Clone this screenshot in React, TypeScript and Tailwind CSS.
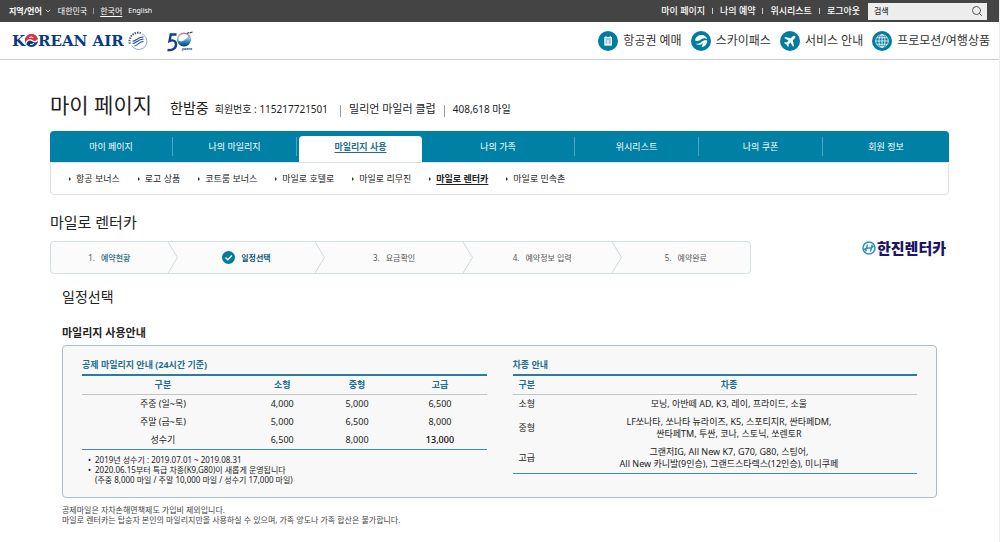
import React from 'react';
import { ChevronDown, Search } from 'lucide-react';

const tabs = ['마이 페이지', '나의 마일리지', '마일리지 사용', '나의 가족', '위시리스트', '나의 쿠폰', '회원 정보'];

const subMenu = ['항공 보너스', '로고 상품', '코트룸 보너스', '마일로 호텔로', '마일로 리무진', '마일로 렌터카', '마일로 민속촌'];

const steps = ['예약현황', '일정선택', '요금확인', '예약정보 입력', '예약완료'];

const mileage = [
  ['주중 (일~목)', '4,000', '5,000', '6,500'],
  ['주말 (금~토)', '5,000', '6,500', '8,000'],
  ['성수기', '6,500', '8,000', '13,000'],
];

const cars = [
  { type: '소형', models: ['모닝, 아반떼 AD, K3, 레이, 프라이드, 소울'] },
  { type: '중형', models: ['LF쏘나타, 쏘나타 뉴라이즈, K5, 스포티지R, 싼타페DM,', '싼타페TM, 투싼, 코나, 스토닉, 쏘렌토R'] },
  { type: '고급', models: ['그랜저IG, All New K7, G70, G80, 스팅어,', 'All New 카니발(9인승), 그랜드스타렉스(12인승), 미니쿠페'] },
];

const TicketIcon = () => (
  <svg viewBox="0 0 20 20" className="size-5" aria-hidden="true">
    <circle cx="10" cy="10" r="10" fill="#007c9e" />
    <rect x="6.3" y="6" width="7.6" height="8.6" fill="#fff" />
    <path d="M8 5v2M12.2 5v2" stroke="#fff" strokeWidth="1" />
    <path d="M7.5 8h5.3M7.5 10h2M10.5 10h2.3M7.5 12h2M10.5 12h2.3" stroke="#007c9e" strokeWidth=".8" />
  </svg>
);

const SkypassIcon = () => (
  <svg viewBox="0 0 20 20" className="size-5" aria-hidden="true">
    <circle cx="10" cy="10" r="10" fill="#007c9e" />
    <path d="M4 9.5C4.500 6 7.500 4 10.500 4c3 0 5.200 1.700 5.800 4-2-1-4.300-.9-6 .3-1.900 1.400-4 2.200-6.300 1.200z" fill="#fff" />
    <path d="M4.300 12.500c2.500.8 4.500 0 6-1.500 1.700-1.600 3.800-2.200 5.900-1.500.1 3.500-2.200 6.300-5.700 6.500.8-1.600 1.300-2.800 1.200-3.800-1.800 1.900-4.900 2.300-7.400.3z" fill="#fff" />
  </svg>
);

const PlaneIcon = () => (
  <svg viewBox="0 0 20 20" className="size-5" aria-hidden="true">
    <circle cx="10" cy="10" r="10" fill="#007c9e" />
    <path d="M15 5c-.7-.7-1.800-.3-2.500.4L10.700 7.200 5.300 6l-1 1 4.300 2.400-2 2.100-1.900-.2-.7.700 2.500 1.500 1.500 2.500.7-.7-.2-1.900 2.100-2L13 15.700l1-1-1.200-5.400 1.800-1.800C15.300 6.800 15.700 5.700 15 5z" fill="#fff" />
  </svg>
);

const GlobeIcon = () => (
  <svg viewBox="0 0 20 20" className="size-5" aria-hidden="true">
    <circle cx="10" cy="10" r="10" fill="#007c9e" />
    <g fill="none" stroke="#fff" strokeWidth=".8">
      <circle cx="10" cy="10" r="6.300" />
      <ellipse cx="10" cy="10" rx="3" ry="6.300" />
      <path d="M10 3.700v12.600M3.700 10h12.600M4.800 6.800h10.400M4.800 13.200h10.400" />
    </g>
  </svg>
);

const services = [
  { label: '항공권 예매', Icon: TicketIcon },
  { label: '스카이패스', Icon: SkypassIcon },
  { label: '서비스 안내', Icon: PlaneIcon },
  { label: '프로모션/여행상품', Icon: GlobeIcon },
];

const Logo = () => (
  <a href="#" className="flex items-center">
    <span className="flex items-center font-['DejaVu_Serif',serif] text-[15px] font-bold leading-5 text-[#0b3a85]">
      K
      <svg viewBox="0 0 14 14" className="size-[13px]" aria-label="O">
        <circle cx="7" cy="7" r="7" fill="#0b3a85" />
        <path d="M.8 10.200A7 7 0 0 1 7 0a7 7 0 0 1 6.900 6C12 9.500 9.500 8.800 7.500 7.200 5 5.500 2 6.500.8 10.200z" fill="#e0333c" />
        <path d="M.8 10.500C2 6.500 5 5.300 7.500 7.100c2.200 1.700 4.700 2 6.400-1" fill="none" stroke="#fff" strokeWidth="1.400" />
        <path d="M4.500 4c1.500-1.200 3.500-1 4.300.4M5.500 11c1.700.5 3.200 0 4-1.400" fill="none" stroke="#fff" strokeWidth="1.100" />
      </svg>
      REAN AIR
    </span>
    <svg viewBox="0 0 22 22" className="ml-1 size-5" aria-label="SkyTeam">
      <path d="M2 14A9.500 9.500 0 0 1 14 2.300" fill="none" stroke="#3c5c98" strokeWidth="2.200" strokeDasharray="1.600 1.100" />
      <path d="M15 3a9 9 0 0 1 1.500 16A9 9 0 0 1 4 16" fill="none" stroke="#6c87b8" strokeWidth=".8" />
      <path d="M5 11.500c4-.5 6-5 12-5M5 14c4-.5 6-5 12-5M7 16.500c4-.5 5-5 10-5" fill="none" stroke="#2b57a0" strokeWidth="1.300" />
    </svg>
    <svg viewBox="0 0 28 22" className="ml-[18px] h-[22px] w-7" aria-label="50 years">
      <defs>
        <linearGradient id="zero" x1="0" y1="0" x2="0" y2="1">
          <stop offset="0" stopColor="#e7707f" />
          <stop offset=".35" stopColor="#9fc3df" />
          <stop offset=".6" stopColor="#2d9ac4" />
          <stop offset="1" stopColor="#123f86" />
        </linearGradient>
      </defs>
      <path d="M10.500 4.500H4.800L3.500 11c3-1.500 6.500-.3 6.500 3.500 0 4-4 6.200-8.500 5.500" fill="none" stroke="#123f86" strokeWidth="2.400" />
      <circle cx="18" cy="9.500" r="6.300" fill="none" stroke="url(#zero)" strokeWidth="1.400" />
      <path d="M12 10.500c3.500 2.500 8-1 12-6 1.500 6-1 11-6 11-3.500 0-5.500-2-6-5z" fill="url(#zero)" />
      <path d="M21 3.500l2-1M23.500 3l3-1" stroke="#123f86" strokeWidth="1.200" />
      <text x="16" y="20" fontSize="4" fontStyle="italic" fontWeight="bold" fill="#123f86">years</text>
    </svg>
  </a>
);

const App: React.FC = () => {
  return (
    <div className="min-h-screen border-r border-[#ececec] bg-white font-['Noto_Sans','Noto_Sans_CJK_KR',sans-serif] text-[9px] leading-3 text-[#222]">
      {/* Utility bar */}
      <div className="flex h-[22px] items-center justify-between bg-[#444] pl-[9px] pr-3 text-[8px] text-white">
        <div className="flex items-center">
          <button className="flex items-center gap-[2px] font-bold">
            지역/언어
            <ChevronDown className="size-2" />
          </button>
          <span className="ml-[6px]">대한민국</span>
          <span className="mx-[6px] h-[6px] w-px bg-[#999]" />
          <a href="#" className="underline underline-offset-2">한국어</a>
          <a href="#" className="ml-[6px] text-[7px]">English</a>
        </div>
        <div className="flex items-center text-[9px] font-medium">
          <a href="#">마이 페이지</a>
          <span className="mx-[7px] h-[6px] w-px bg-[#ccc]" />
          <a href="#">나의 예약</a>
          <span className="mx-[7px] h-[6px] w-px bg-[#ccc]" />
          <a href="#">위시리스트</a>
          <span className="mx-[7px] h-[6px] w-px bg-[#ccc]" />
          <a href="#">로그아웃</a>
          <div className="ml-2 flex h-[17px] w-[119px] items-center bg-[#ededed] pl-[6px] pr-1">
            <input
              type="text"
              aria-label="검색"
              placeholder="검색"
              className="w-full min-w-0 flex-1 bg-transparent text-[8px] outline-none placeholder:text-[#333]"
            />
            <button aria-label="검색하기">
              <Search className="size-3 text-[#555]" strokeWidth={2} />
            </button>
          </div>
        </div>
      </div>

      {/* Header */}
      <header className="flex h-[38px] items-center justify-between border-b border-[#ccc] pl-3 pr-[9px]">
        <Logo />
        <nav className="flex items-center gap-[9px] text-[12px] leading-5 text-[#333]">
          {services.map(({ label, Icon }) => (
            <a key={label} href="#" className="flex items-center gap-[5px]">
              <Icon />
              {label}
            </a>
          ))}
        </nav>
      </header>

      <main className="px-[50px]">
        {/* Member summary */}
        <div className="mt-[31px] flex h-7 items-baseline leading-7">
          <h1 className="text-[21px]">마이 페이지</h1>
          <span className="ml-[18px] text-[14px]">한밤중</span>
          <span className="ml-[6px] text-[10px]">회원번호 : 115217721501</span>
          <span className="ml-3 mt-3 h-3 w-px self-center bg-[#999]" />
          <span className="ml-2 text-[11px]">밀리언 마일러 클럽</span>
          <span className="ml-2 mt-3 h-3 w-px self-center bg-[#999]" />
          <span className="ml-2 text-[10px]">408,618 마일</span>
        </div>

        {/* Main tabs */}
        <nav className="mt-3 grid h-[31px] grid-cols-[123fr_124fr_125fr_153fr_124fr_124fr_126fr] rounded-t-sm bg-[#0080a5] text-white">
          {tabs.map((tab, i) =>
            i === 2 ? (
              <a key={tab} href="#" className="ml-[2px] mt-[5px] flex items-center justify-center rounded-t-sm bg-white pb-1 font-bold text-[#1f6f93] underline underline-offset-2">
                {tab}
              </a>
            ) : (
              <a key={tab} href="#" className="flex items-center">
                <span className="flex-1 text-center">{tab}</span>
                {i < tabs.length - 1 && <span className="h-[19px] w-px bg-[#4da6c0]" />}
              </a>
            ),
          )}
        </nav>
        <nav className="flex h-[33px] items-center gap-[18px] rounded-b-sm border border-[#d9e2e5] pl-[18px]">
          {subMenu.map((item) => (
            <a key={item} href="#" className="flex items-center gap-[5px]">
              <svg viewBox="0 0 2 4" className="h-1 w-[2px]" aria-hidden="true">
                <path d="M0 0l2 2-2 2z" fill="#333" />
              </svg>
              <span className={item === '마일로 렌터카' ? 'font-bold underline underline-offset-2' : ''}>{item}</span>
            </a>
          ))}
        </nav>

        {/* Title and booking steps */}
        <div className="mt-[17px] flex items-end justify-between">
          <div className="w-[78%]">
            <h2 className="text-[15px] leading-5">마일로 렌터카</h2>
            <ol className="mt-[9px] grid h-[33px] grid-cols-[127fr_148fr_148fr_149fr_129fr] rounded-sm border border-[#d3e0e4] bg-[#fbfbfb] text-[8px] text-[#555]">
              {steps.map((step, i) => (
                <li key={step} className="flex items-center">
                  <span className="flex flex-1 items-center justify-center gap-[6px]">
                    {i === 1 ? (
                      <svg viewBox="0 0 13 13" className="size-[13px]" aria-hidden="true">
                        <circle cx="6.500" cy="6.500" r="6.500" fill="#007c9e" />
                        <path d="M3.500 6.500l2.300 2.300 4-4.200" fill="none" stroke="#fff" strokeWidth="1.400" />
                      </svg>
                    ) : (
                      <span>{i + 1}.</span>
                    )}
                    <span className={i === 1 ? 'font-bold text-[#0f5a78]' : i === 0 ? 'font-medium text-[#2b6b85]' : ''}>{step}</span>
                  </span>
                  {i < steps.length - 1 && (
                    <svg viewBox="0 0 10 31" className="h-full w-[10px]" aria-hidden="true">
                      <path d="M0 0l9.500 15.500L0 31" fill="none" stroke="#c9d9de" />
                    </svg>
                  )}
                </li>
              ))}
            </ol>
          </div>
          <a href="#" className="mb-4 mr-[3px] flex items-center gap-px text-[15px] font-black leading-5 text-[#1c1464]">
            <svg viewBox="0 0 14 14" className="size-[14px]" aria-hidden="true">
              <circle cx="7" cy="7" r="6" fill="none" stroke="#2a93bd" strokeWidth="1.500" />
              <path d="M5.500 3.500l-1.800 7M10.300 3.500l-1.800 7M2 8.500c3-2.500 6-.5 10-3" fill="none" stroke="#2a93bd" strokeWidth="1.400" />
            </svg>
            한진렌터카
          </a>
        </div>

        <section className="mx-3">
          <h3 className="mt-[13px] text-[14px] leading-5">일정선택</h3>
          <h4 className="mt-[18px] text-[11px] font-bold leading-4">마일리지 사용안내</h4>

          {/* Mileage guide */}
          <div className="mt-1 grid grid-cols-2 gap-x-[26px] rounded-sm border border-[#a9bfc7] bg-[#f8f8f8] px-[19px] pb-3 pt-[13px]">
            <div>
              <table className="w-full table-fixed border-b border-b-[#3a8fab] text-center">
                <caption className="pb-[3px] text-left font-bold text-[#1f6f8f]">공제 마일리지 안내 (24시간 기준)</caption>
                <colgroup>
                  <col className="w-[40%]" />
                  <col className="w-[19%]" />
                  <col className="w-[18%]" />
                  <col className="w-[23%]" />
                </colgroup>
                <thead className="border-b border-t-2 border-b-[#c4c4c4] border-t-[#2b7d99] text-[#1f6f8f]">
                  <tr>
                    {['구분', '소형', '중형', '고급'].map((head) => (
                      <th key={head} scope="col" className="py-[3px]">{head}</th>
                    ))}
                  </tr>
                </thead>
                <tbody>
                  {mileage.map((row) => (
                    <tr key={row[0]}>
                      {row.map((cell, i) => (
                        <td key={i} className={cell === '13,000' ? 'py-[3px] font-medium text-black' : 'py-[3px]'}>{cell}</td>
                      ))}
                    </tr>
                  ))}
                </tbody>
              </table>
              <ul className="mt-[5px] list-none pl-[6px] text-[8px] leading-[10px]">
                <li className="flex gap-1">
                  <span>•</span>
                  2019년 성수기 : 2019.07.01 ~ 2019.08.31
                </li>
                <li className="flex gap-1">
                  <span>•</span>
                  <span>
                    2020.06.15부터 특급 차종(K9,G80)이 새롭게 운영됩니다
                    <br />
                    (주중 8,000 마일 / 주말 10,000 마일 / 성수기 17,000 마일)
                  </span>
                </li>
              </ul>
            </div>
            <div>
              <table className="w-full table-fixed border-b border-b-[#3a8fab] text-center">
                <caption className="pb-[3px] text-left font-bold text-[#1f6f8f]">차종 안내</caption>
                <colgroup>
                  <col className="w-[7%]" />
                  <col />
                </colgroup>
                <thead className="border-b border-t-2 border-b-[#c4c4c4] border-t-[#2b7d99] text-[#1f6f8f]">
                  <tr>
                    <th scope="col" className="py-[3px]">구분</th>
                    <th scope="col" className="py-[3px]">차종</th>
                  </tr>
                </thead>
                <tbody>
                  {cars.map(({ type, models }) => (
                    <tr key={type}>
                      <td className="py-[3px]">{type}</td>
                      <td className="py-[3px]">
                        {models.map((line) => (
                          <div key={line}>{line}</div>
                        ))}
                      </td>
                    </tr>
                  ))}
                </tbody>
              </table>
            </div>
          </div>

          <div className="mt-[7px] text-[8px] leading-[10px] text-[#444]">
            <p>공제마일은 자차손해면책제도 가입비 제외입니다.</p>
            <p>마일로 렌터카는 탑승자 본인의 마일리지만을 사용하실 수 있으며, 가족 양도나 가족 합산은 불가합니다.</p>
          </div>
        </section>
      </main>
    </div>
  );
};

export default App;
